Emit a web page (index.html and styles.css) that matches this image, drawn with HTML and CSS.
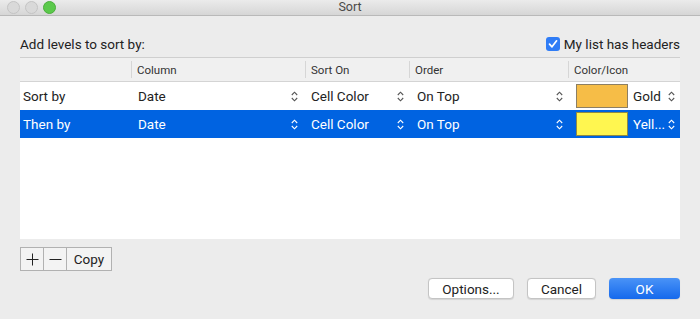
FILE: index.html
```html
<!DOCTYPE html>
<html lang="en">
<head>
    <meta charset="UTF-8">
    <title>Sort</title>
    <link rel="stylesheet" href="styles.css">
</head>
<body>
    <div class="window">
        <div class="titlebar">
            <div class="lights">
                <span class="light"></span>
                <span class="light"></span>
                <span class="light green"></span>
            </div>
            <div class="title">Sort</div>
        </div>
        <div class="content">
            <div class="top-row">
                <div class="label">Add levels to sort by:</div>
                <label class="check">
                    <span class="box">
                        <svg width="10" height="10" viewBox="0 0 10 10"><path d="M1.5 5.2 L4 7.8 L8.6 1.8" fill="none" stroke="#fff" stroke-width="1.7" stroke-linecap="round" stroke-linejoin="round"/></svg>
                    </span>
                    My list has headers
                </label>
            </div>
            <div class="table">
                <div class="row head">
                    <div class="cell"></div>
                    <div class="cell sep">Column</div>
                    <div class="cell sep">Sort On</div>
                    <div class="cell sep">Order</div>
                    <div class="cell sep">Color/Icon</div>
                </div>
                <div class="row">
                    <div class="cell first">Sort by</div>
                    <div class="cell pick col"><span>Date</span><svg class="updown" width="7" height="11" viewBox="0 0 7 11"><path d="M0.8 4 L3.5 1.2 L6.2 4 M0.8 7 L3.5 9.8 L6.2 7" fill="none" stroke="currentColor" stroke-width="1.1"/></svg></div>
                    <div class="cell pick on"><span>Cell Color</span><svg class="updown" width="7" height="11" viewBox="0 0 7 11"><path d="M0.8 4 L3.5 1.2 L6.2 4 M0.8 7 L3.5 9.8 L6.2 7" fill="none" stroke="currentColor" stroke-width="1.1"/></svg></div>
                    <div class="cell pick order"><span>On Top</span><svg class="updown" width="7" height="11" viewBox="0 0 7 11"><path d="M0.8 4 L3.5 1.2 L6.2 4 M0.8 7 L3.5 9.8 L6.2 7" fill="none" stroke="currentColor" stroke-width="1.1"/></svg></div>
                    <div class="cell pick color"><span class="swatch gold"></span><span class="cname">Gold</span><svg class="updown" width="7" height="11" viewBox="0 0 7 11"><path d="M0.8 4 L3.5 1.2 L6.2 4 M0.8 7 L3.5 9.8 L6.2 7" fill="none" stroke="currentColor" stroke-width="1.1"/></svg></div>
                </div>
                <div class="row selected">
                    <div class="cell first">Then by</div>
                    <div class="cell pick col"><span>Date</span><svg class="updown" width="7" height="11" viewBox="0 0 7 11"><path d="M0.8 4 L3.5 1.2 L6.2 4 M0.8 7 L3.5 9.8 L6.2 7" fill="none" stroke="currentColor" stroke-width="1.1"/></svg></div>
                    <div class="cell pick on"><span>Cell Color</span><svg class="updown" width="7" height="11" viewBox="0 0 7 11"><path d="M0.8 4 L3.5 1.2 L6.2 4 M0.8 7 L3.5 9.8 L6.2 7" fill="none" stroke="currentColor" stroke-width="1.1"/></svg></div>
                    <div class="cell pick order"><span>On Top</span><svg class="updown" width="7" height="11" viewBox="0 0 7 11"><path d="M0.8 4 L3.5 1.2 L6.2 4 M0.8 7 L3.5 9.8 L6.2 7" fill="none" stroke="currentColor" stroke-width="1.1"/></svg></div>
                    <div class="cell pick color"><span class="swatch yellow"></span><span class="cname">Yell...</span><svg class="updown" width="7" height="11" viewBox="0 0 7 11"><path d="M0.8 4 L3.5 1.2 L6.2 4 M0.8 7 L3.5 9.8 L6.2 7" fill="none" stroke="currentColor" stroke-width="1.1"/></svg></div>
                </div>
            </div>
            <div class="tools">
                <button class="tool icon"><svg width="13" height="13" viewBox="0 0 13 13"><path d="M6.5 0.5 V12.5 M0.5 6.5 H12.5" stroke="#222" stroke-width="1"/></svg></button>
                <button class="tool icon"><svg width="13" height="13" viewBox="0 0 13 13"><path d="M0.5 6.5 H12.5" stroke="#222" stroke-width="1"/></svg></button>
                <button class="tool copy">Copy</button>
            </div>
            <div class="actions">
                <button class="btn">Options...</button>
                <button class="btn">Cancel</button>
                <button class="btn primary">OK</button>
            </div>
        </div>
    </div>
</body>
</html>
```

FILE: styles.css
```css
body, html {
    margin: 0;
    font-family: Roboto, "Liberation Sans", sans-serif;
    font-size: 13.5px;
    color: #222;
    background-color: #ececec;
}
.window {
    width: 700px;
    height: 319px;
    overflow: hidden;
}
.titlebar {
    height: 15px;
    position: relative;
    background: linear-gradient(#ebebeb, #d6d6d6);
    border-bottom: 1px solid #b9b9b9;
}
.lights {
    position: absolute;
    left: 7px;
    top: 1px;
    display: flex;
    gap: 5px;
}
.light {
    width: 11px;
    height: 11px;
    border-radius: 50%;
    background: #d9d9d9;
    border: 1px solid #c4c4c4;
}
.light.green {
    background: #5bc94b;
    border-color: #4bae3c;
}
.title {
    text-align: center;
    line-height: 14px;
    color: #4a4a4a;
    font-size: 12.5px;
}
.content {
    padding: 0 20px;
}
.top-row {
    display: flex;
    justify-content: space-between;
    align-items: center;
    height: 16px;
    margin-top: 20px;
    margin-bottom: 5px;
}
.check {
    display: flex;
    align-items: center;
    gap: 4px;
}
.box {
    width: 14px;
    height: 14px;
    border-radius: 3px;
    background: #2f7cf6;
    display: flex;
    align-items: center;
    justify-content: center;
}
.table {
    height: 181px;
    background: #fff;
    border-top: 1px solid #cfcfcf;
}
.row {
    display: grid;
    grid-template-columns: 111px 174px 104px 159px 112px;
    height: 28px;
    align-items: center;
}
.row.head {
    height: 23px;
    background: #f0f0f0;
    border-bottom: 1px solid #d4d4d4;
    font-size: 11.5px;
    color: #333;
}
.cell {
    height: 100%;
    display: flex;
    align-items: center;
    white-space: nowrap;
}
.head .cell:first-child {
    padding-left: 0;
}
.head .sep {
    border-left: 1px solid #d6d6d6;
    height: 17px;
    padding-left: 5px;
}
.first {
    padding-left: 3px;
}
.pick {
    justify-content: space-between;
    padding-right: 5px;
}
.pick.col {
    padding-left: 7px;
    padding-right: 7px;
}
.pick.on {
    padding-left: 6px;
}
.pick.order {
    padding-left: 8px;
}
.pick.color {
    padding-left: 8px;
}
.updown {
    color: #555;
    flex-shrink: 0;
}
.swatch {
    width: 52px;
    height: 24px;
    border: 1px solid #8c7f63;
    box-sizing: border-box;
    flex-shrink: 0;
}
.swatch.gold {
    background: #f6bd47;
}
.swatch.yellow {
    background: #fff650;
    border-color: #8e8a45;
}
.cname {
    margin-left: 5px;
    flex: 1;
}
.row.selected {
    background: #0063e1;
    color: #fff;
}
.row.selected .updown {
    color: #fff;
}
.tools {
    display: flex;
    margin-top: 8px;
    height: 24px;
}
.tool {
    font-family: inherit;
    font-size: 13.5px;
    color: #222;
    background: #f3f3f3;
    border: 1px solid #b1b1b1;
    margin: 0 0 0 -1px;
    padding: 0;
    height: 24px;
    display: flex;
    align-items: center;
    justify-content: center;
}
.tool:first-child {
    margin-left: 0;
}
.tool.icon {
    width: 24px;
}
.tool.copy {
    width: 46px;
}
.actions {
    display: flex;
    justify-content: flex-end;
    gap: 13px;
    margin-top: 7px;
}
.btn {
    font-family: inherit;
    font-size: 13.5px;
    color: #222;
    background: #fff;
    border: 1px solid #c4c4c4;
    border-radius: 4px;
    height: 21px;
    padding: 0;
    width: 86px;
    box-shadow: 0 0.5px 1px rgba(0, 0, 0, 0.1);
}
.btn:nth-child(2) {
    width: 69px;
}
.btn.primary {
    width: 71px;
    color: #fff;
    border: none;
    background: linear-gradient(#4a93f7, #1569ec);
}
```
